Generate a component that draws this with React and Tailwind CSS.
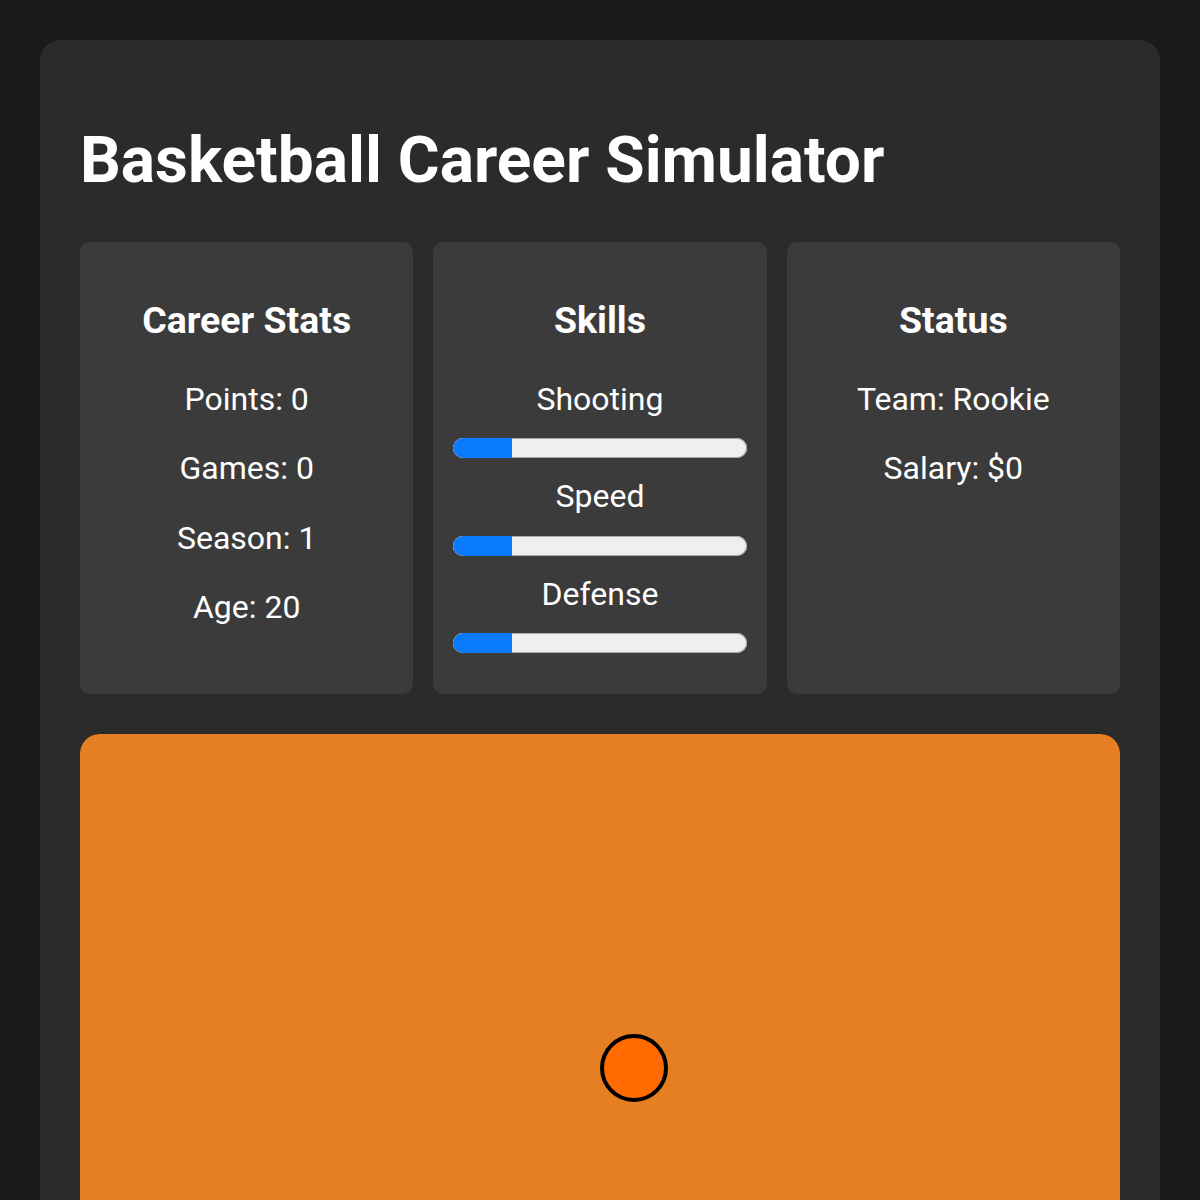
import React from "react";

const font = { fontFamily: "Roboto, 'Noto Sans', sans-serif" };

function Bar({ value }) {
  return (
    <div className="relative h-5 w-full rounded-full bg-[#efefef] shadow-[inset_0_0_0_1px_#a9a9a9] overflow-hidden mb-5">
      <div
        className="absolute left-0 top-0 h-full rounded-l-full bg-[#0a7bff]"
        style={{ width: `${value}%` }}
      />
    </div>
  );
}

function Card({ title, children }) {
  return (
    <div className="rounded-[10px] bg-[#3b3b3b] px-5 pt-5 pb-[21px] text-center">
      <h3 className="text-[37.44px] leading-[43.8px] font-bold mt-[37.44px] mb-[37.44px]">{title}</h3>
      {children}
    </div>
  );
}

function Item({ children }) {
  return <p className="text-[32px] leading-[37.5px] mb-8">{children}</p>;
}

export default function App() {
  return (
    <div className="min-h-[1200px] bg-[#1a1a1a] p-10 text-white" style={font}>
      <div className="rounded-[20px] bg-[#2b2b2b] px-10 pt-10">
        <h1 className="text-[64px] leading-[75px] font-bold mt-[43px] mb-[44px]">
          Basketball Career Simulator
        </h1>
        <div className="grid grid-cols-3 gap-5">
          <Card title="Career Stats">
            <Item>Points: 0</Item>
            <Item>Games: 0</Item>
            <Item>Season: 1</Item>
            <Item>Age: 20</Item>
          </Card>
          <Card title="Skills">
            <div className="text-[32px] leading-[37.5px] mb-5">Shooting</div>
            <Bar value={20} />
            <div className="text-[32px] leading-[37.5px] mb-5">Speed</div>
            <Bar value={20} />
            <div className="text-[32px] leading-[37.5px] mb-5">Defense</div>
            <Bar value={20} />
          </Card>
          <Card title="Status">
            <Item>Team: Rookie</Item>
            <Item>Salary: $0</Item>
          </Card>
        </div>
        <div className="relative mt-10 h-[800px] rounded-[20px] bg-[#e67e22]">
          <div className="absolute left-[520px] top-[300px] h-[68px] w-[68px] rounded-full border-4 border-black bg-[#ff6b00]" />
        </div>
        <div className="h-10" />
      </div>
    </div>
  );
}
